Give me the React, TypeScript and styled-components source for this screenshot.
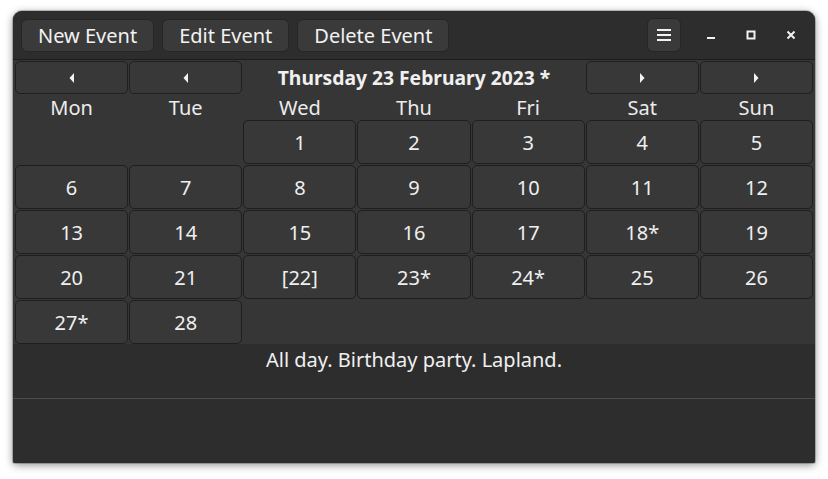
import React from "react";
import styled, { createGlobalStyle } from "styled-components";

const Global = createGlobalStyle`
  html, body { margin: 0; padding: 0; background: #ffffff; }
  body { font-family: "Noto Sans", "Open Sans", sans-serif; }
  * { box-sizing: border-box; }
`;

const Page = styled.div`
  padding: 11px 13px 16px 13px;
`;

const Window = styled.div`
  width: 802px;
  height: 452px;
  background: #363636;
  border-radius: 9px 9px 2px 2px;
  box-shadow: 0 2px 9px rgba(0, 0, 0, 0.45), 0 0 0 1px rgba(0, 0, 0, 0.2);
  overflow: hidden;
  display: flex;
  flex-direction: column;
  color: #f0f0f0;
`;

const HeaderBar = styled.div`
  height: 49px;
  flex: none;
  background: #2d2d2d;
  border-bottom: 1px solid #1c1c1c;
  display: flex;
  align-items: center;
  padding: 0 8px;
  gap: 8px;
`;

const HeaderButton = styled.button`
  height: 33px;
  padding: 2px 16px 0 16px;
  background: #3a3a3a;
  border: 1px solid #262626;
  border-radius: 6px;
  color: #f2f2f2;
  font-family: inherit;
  font-size: 20px;
  line-height: 1;
  display: flex;
  align-items: center;
`;

const Spacer = styled.div`
  flex: 1;
`;

const MenuButton = styled.button`
  width: 34px;
  height: 34px;
  flex: none;
  background: #3a3a3a;
  border: 1px solid #262626;
  border-radius: 6px;
  display: flex;
  align-items: center;
  justify-content: center;
  padding: 0;
  margin-right: 10px;
`;

const WinControls = styled.div`
  display: flex;
  align-items: center;
  gap: 16px;
  margin-right: 4px;
`;

const WinButton = styled.div`
  width: 24px;
  height: 24px;
  display: flex;
  align-items: center;
  justify-content: center;
`;

const Content = styled.div`
  padding: 1px 2px 0 2px;
  display: grid;
  grid-template-columns: repeat(7, 1fr);
  column-gap: 1px;
  row-gap: 1px;
  background: #363636;
  flex: none;
`;

const NavButton = styled.button`
  height: 33px;
  background: #383838;
  border: 1px solid #1f1f1f;
  border-radius: 5px;
  display: flex;
  align-items: center;
  justify-content: center;
  padding: 0;
`;

const Title = styled.div<{ $span: number }>`
  grid-column: span ${(p) => p.$span};
  display: flex;
  align-items: center;
  justify-content: center;
  font-weight: 700;
  font-size: 19.3px;
  color: #f0f0f0;
`;

const DayName = styled.div`
  height: 24px;
  display: flex;
  align-items: center;
  justify-content: center;
  font-size: 20px;
  color: #ececec;
  padding-top: 1px;
`;

const Empty = styled.div`
  height: 44px;
`;

const Cell = styled.div`
  height: 44px;
  background: #383838;
  border: 1px solid #1e1e1e;
  border-radius: 5px;
  display: flex;
  align-items: center;
  justify-content: center;
  padding-top: 1px;
  font-size: 20px;
  color: #efefef;
`;

const EventArea = styled.div`
  flex: none;
  height: 55px;
  background: #2d2d2d;
  border-bottom: 1px solid #4c4c4c;
  display: flex;
  justify-content: center;
  padding-top: 2px;
  font-size: 20px;
  color: #f0f0f0;
`;

const Footer = styled.div`
  flex: 1;
  background: #2d2d2d;
`;

const Tri = ({ dir }: { dir: "left" | "right" }) => (
  <svg width="8" height="12" viewBox="0 0 8 12">
    {dir === "left" ? (
      <path d="M6 1 L1.5 6 L6 11 Z" fill="#f2f2f2" />
    ) : (
      <path d="M2 1 L6.5 6 L2 11 Z" fill="#f2f2f2" />
    )}
  </svg>
);

const days = ["Mon", "Tue", "Wed", "Thu", "Fri", "Sat", "Sun"];
const labels = [
  "1", "2", "3", "4", "5",
  "6", "7", "8", "9", "10", "11", "12",
  "13", "14", "15", "16", "17", "18*", "19",
  "20", "21", "[22]", "23*", "24*", "25", "26",
  "27*", "28",
];

export default function App() {
  return (
    <>
      <Global />
      <Page>
        <Window>
          <HeaderBar>
            <HeaderButton>New Event</HeaderButton>
            <HeaderButton>Edit Event</HeaderButton>
            <HeaderButton>Delete Event</HeaderButton>
            <Spacer />
            <MenuButton>
              <svg width="16" height="14" viewBox="0 0 16 14">
                <rect x="1" y="1" width="14" height="2" fill="#f2f2f2" />
                <rect x="1" y="6" width="14" height="2" fill="#f2f2f2" />
                <rect x="1" y="11" width="14" height="2" fill="#f2f2f2" />
              </svg>
            </MenuButton>
            <WinControls>
              <WinButton>
                <svg width="10" height="10" viewBox="0 0 10 10">
                  <rect x="1" y="7" width="8" height="2" fill="#f2f2f2" />
                </svg>
              </WinButton>
              <WinButton>
                <svg width="10" height="10" viewBox="0 0 10 10">
                  <rect x="1.5" y="1.5" width="7" height="7" fill="none" stroke="#f2f2f2" strokeWidth="2" />
                </svg>
              </WinButton>
              <WinButton>
                <svg width="10" height="10" viewBox="0 0 10 10">
                  <path d="M1.5 1.5 L8.5 8.5 M8.5 1.5 L1.5 8.5" stroke="#f2f2f2" strokeWidth="2" />
                </svg>
              </WinButton>
            </WinControls>
          </HeaderBar>
          <Content>
            <NavButton><Tri dir="left" /></NavButton>
            <NavButton><Tri dir="left" /></NavButton>
            <Title $span={3}>Thursday 23 February 2023 *</Title>
            <NavButton><Tri dir="right" /></NavButton>
            <NavButton><Tri dir="right" /></NavButton>
            {days.map((d) => (
              <DayName key={d}>{d}</DayName>
            ))}
            <Empty />
            <Empty />
            {labels.map((l) => (
              <Cell key={l}>{l}</Cell>
            ))}
          </Content>
          <EventArea>All day. Birthday party. Lapland.</EventArea>
          <Footer />
        </Window>
      </Page>
    </>
  );
}
